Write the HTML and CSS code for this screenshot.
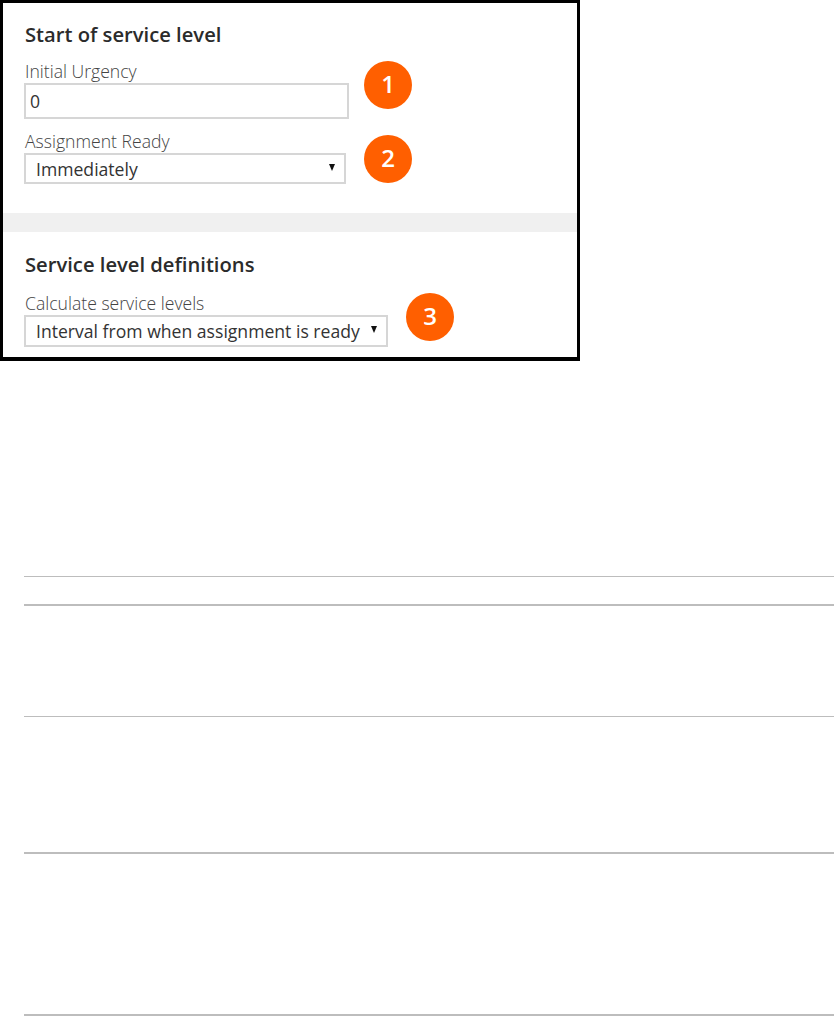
FILE: index.html
```html
<!DOCTYPE html>
<html lang="en">
<head>
    <meta charset="UTF-8">
    <meta name="viewport" content="width=device-width, initial-scale=1.0">
    <title>Service level settings</title>
    <link rel="stylesheet" href="styles.css">
</head>
<body>
    <figure class="shot">
        <section class="panel panel-start">
            <h2>Start of service level</h2>
            <div class="field-row row-urgency">
                <div class="field">
                    <label for="urgency">Initial Urgency</label>
                    <input id="urgency" class="input-urgency" type="text" value="0">
                </div>
                <span class="badge">1</span>
            </div>
            <div class="field-row row-ready">
                <div class="field">
                    <label for="ready">Assignment Ready</label>
                    <div class="select-wrap wrap-ready">
                        <select id="ready">
                            <option>Immediately</option>
                        </select>
                    </div>
                </div>
                <span class="badge">2</span>
            </div>
        </section>
        <div class="band"></div>
        <section class="panel panel-defs">
            <h2>Service level definitions</h2>
            <div class="field-row row-calc">
                <div class="field">
                    <label for="calc">Calculate service levels</label>
                    <div class="select-wrap wrap-calc">
                        <select id="calc">
                            <option>Interval from when assignment is ready</option>
                        </select>
                    </div>
                </div>
                <span class="badge">3</span>
            </div>
        </section>
    </figure>
    <div class="rules">
        <div class="rule rule-a"></div>
        <div class="rule rule-b"></div>
        <div class="rule rule-c"></div>
        <div class="rule rule-d"></div>
        <div class="rule rule-e"></div>
    </div>
</body>
</html>
```
FILE: styles.css
```css
html, body {
    margin: 0;
    padding: 0;
    background: #fff;
}
body {
    font-family: 'Open Sans', 'Liberation Sans', sans-serif;
    color: #333;
    height: 1016px;
    overflow: hidden;
}
.shot {
    box-sizing: border-box;
    width: 580px;
    height: 361px;
    margin: 0;
    border: 3px solid #000;
    border-bottom-width: 4px;
    background: #fff;
}
.panel {
    padding-left: 21px;
}
.panel-start {
    height: 210px;
    padding-top: 19px;
    box-sizing: border-box;
}
.panel-defs {
    padding-top: 20px;
}
h2 {
    margin: 0 0 0 1px;
    font-size: 20.2px;
    line-height: 25px;
    font-weight: 600;
    color: #2b2b2b;
}
.field-row {
    display: flex;
    align-items: flex-start;
}
.row-urgency {
    margin-top: 14px;
}
.row-ready {
    margin-top: 12px;
}
.row-calc {
    margin-top: 16px;
}
.field {
    display: flex;
    flex-direction: column;
}
label {
    font-size: 17.6px;
    line-height: 20px;
    font-weight: 300;
    color: #444;
    margin: 0 0 2px 1px;
    white-space: nowrap;
}
input, select {
    box-sizing: border-box;
    display: block;
    width: 100%;
    margin: 0;
    border: 2px solid #d6d6d6;
    border-radius: 0;
    background: #fff;
    font-family: inherit;
    font-size: 17.6px;
    color: #333;
    outline: none;
}
.input-urgency {
    width: 325px;
    height: 36px;
    padding: 0 4px;
}
select {
    appearance: none;
    height: 100%;
    padding: 0 0 0 10px;
}
.select-wrap {
    position: relative;
}
.select-wrap::after {
    content: "";
    position: absolute;
    right: 11px;
    top: 11px;
    border-left: 3.5px solid transparent;
    border-right: 3.5px solid transparent;
    border-top: 7px solid #111;
}
.wrap-ready {
    width: 322px;
    height: 31px;
}
.wrap-calc {
    width: 364px;
    height: 32px;
}
.badge {
    flex: none;
    width: 48px;
    height: 48px;
    border-radius: 50%;
    background: #ff5f00;
    color: #fff;
    font-size: 24px;
    font-weight: 600;
    line-height: 46px;
    text-align: center;
}
.row-urgency .badge {
    margin-left: 15px;
}
.row-ready .badge {
    margin-left: 18px;
    margin-top: 4px;
}
.row-calc .badge {
    margin-left: 18px;
}
.band {
    height: 19px;
    background: #f0f0f0;
}
.rules {
    margin-left: 24px;
}
.rule {
    box-sizing: border-box;
    border-bottom: 1px solid #bdbdbd;
}
.rule-a {
    height: 216px;
}
.rule-b {
    height: 29px;
    border-bottom-width: 2px;
}
.rule-c {
    height: 111px;
}
.rule-d {
    height: 137px;
    border-bottom-width: 2px;
}
.rule-e {
    height: 162px;
    border-bottom-width: 2px;
}
```
